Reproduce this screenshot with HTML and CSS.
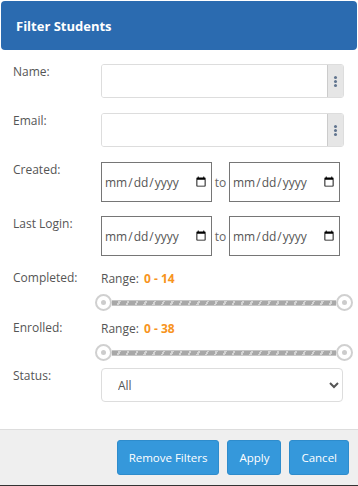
FILE: index.html
```html
<!DOCTYPE html>
<html lang="en">
<head>
    <meta charset="UTF-8">
    <meta name="viewport" content="width=device-width, initial-scale=1.0">
    <title>Filter Students</title>
    <link rel="stylesheet" href="styles.css">
</head>
<body>
    <div class="dialog">
        <header class="dialog-header">
            <h1>Filter Students</h1>
        </header>
        <div class="dialog-body">
            <div class="row text-row">
                <label class="row-label">Name:</label>
                <div class="text-group">
                    <input type="text" class="text-input">
                    <span class="dots-btn"><i></i><i></i><i></i></span>
                </div>
            </div>
            <div class="row text-row">
                <label class="row-label">Email:</label>
                <div class="text-group">
                    <input type="text" class="text-input">
                    <span class="dots-btn"><i></i><i></i><i></i></span>
                </div>
            </div>
            <div class="row">
                <label class="row-label">Created:</label>
                <div class="date-range">
                    <input type="date" class="date-input">
                    <span class="to">to</span>
                    <input type="date" class="date-input">
                </div>
            </div>
            <div class="row">
                <label class="row-label">Last Login:</label>
                <div class="date-range">
                    <input type="date" class="date-input">
                    <span class="to">to</span>
                    <input type="date" class="date-input">
                </div>
            </div>
            <div class="row slider-row">
                <label class="row-label">Completed:</label>
                <div class="slider-box">
                    <div class="range-text">Range: <b>0 - 14</b></div>
                    <div class="slider">
                        <span class="handle"></span>
                        <span class="track"></span>
                        <span class="handle"></span>
                    </div>
                </div>
            </div>
            <div class="row slider-row">
                <label class="row-label">Enrolled:</label>
                <div class="slider-box">
                    <div class="range-text">Range: <b>0 - 38</b></div>
                    <div class="slider">
                        <span class="handle"></span>
                        <span class="track"></span>
                        <span class="handle"></span>
                    </div>
                </div>
            </div>
            <div class="row">
                <label class="row-label">Status:</label>
                <select class="status-select">
                    <option>All</option>
                </select>
            </div>
        </div>
        <footer class="dialog-footer">
            <button class="btn">Remove Filters</button>
            <button class="btn">Apply</button>
            <button class="btn">Cancel</button>
        </footer>
    </div>
</body>
</html>
```

FILE: styles.css
```css
body {
    font-family: 'Open Sans', sans-serif;
    margin: 0;
    padding: 0;
    background: #fff;
    color: #555;
    font-size: 12px;
}
.dialog {
    width: 358px;
    height: 486px;
    display: flex;
    flex-direction: column;
    border-bottom: 1px solid #333;
    box-sizing: border-box;
}
.dialog-header {
    margin: 1px 1px 0;
    height: 49px;
    flex: none;
    background: #2b6bb0;
    border-radius: 4px;
    display: flex;
    align-items: center;
    padding: 0 15px;
}
.dialog-header h1 {
    margin: 0;
    color: #fff;
    font-size: 13px;
    font-weight: 700;
}
.dialog-body {
    flex: 1;
    padding: 14px 14px 0 13px;
}
.row {
    display: flex;
    margin-bottom: 14px;
}
.text-row {
    margin-bottom: 15px;
}
.row-label {
    width: 88px;
    flex: none;
    line-height: 16px;
    color: #555;
}
.text-group {
    display: flex;
    width: 243px;
    height: 34px;
    border: 1px solid #ddd;
    border-radius: 3px;
    box-sizing: border-box;
    overflow: hidden;
}
.text-input {
    flex: 1;
    border: none;
    outline: none;
    min-width: 0;
}
.dots-btn {
    width: 15px;
    background: #e6e6e6;
    border-left: 1px solid #ccc;
    display: flex;
    flex-direction: column;
    align-items: center;
    justify-content: center;
    gap: 1px;
}
.dots-btn i {
    width: 3px;
    height: 3px;
    border-radius: 50%;
    background: #61758f;
}
.date-range {
    display: flex;
    align-items: center;
}
.date-input {
    width: 111px;
    height: 40px;
    box-sizing: border-box;
    border: 1px solid #767676;
    border-radius: 0;
    padding: 0 2px;
    font-family: 'Open Sans', sans-serif;
    font-size: 12px;
    color: #555;
}
.to {
    width: 17px;
    text-align: center;
    color: #666;
}
.slider-row {
    margin-bottom: 9px;
}
.slider-row + .slider-row {
    margin-bottom: 7px;
}
.slider-box {
    width: 244px;
    padding-top: 1px;
}
.range-text {
    line-height: 16px;
    margin-bottom: 7px;
    color: #555;
}
.range-text b {
    color: #f7941d;
    margin-left: 2px;
}
.slider {
    display: flex;
    align-items: center;
    margin-left: -6px;
    width: 258px;
}
.handle {
    width: 17px;
    height: 17px;
    box-sizing: border-box;
    border: 2px solid #d0d0d0;
    border-radius: 50%;
    background: #fff;
    display: flex;
    align-items: center;
    justify-content: center;
    flex: none;
}
.handle::after {
    content: '';
    width: 5px;
    height: 5px;
    border-radius: 50%;
    background: #ccc;
}
.track {
    flex: 1;
    height: 6px;
    background: repeating-linear-gradient(115deg, #a8a8a8 0 6px, #d4d4d4 6px 8px);
    border-top: 1px solid #c6c6c6;
    border-bottom: 1px solid #c6c6c6;
    box-sizing: border-box;
}
.status-select {
    width: 242px;
    height: 34px;
    border: 1px solid #ddd;
    border-radius: 4px;
    background: #fff;
    font-family: 'Open Sans', sans-serif;
    font-size: 12px;
    color: #555;
    padding: 0 12px;
}
.dialog-footer {
    height: 55px;
    flex: none;
    background: #efefef;
    border-top: 1px solid #ddd;
    display: flex;
    justify-content: flex-end;
    align-items: center;
    gap: 8px;
    padding: 0 9px 0 0;
}
.btn {
    height: 35px;
    padding: 0 11px;
    background: #3598db;
    color: #fff;
    border: 1px solid #2e8ccc;
    border-radius: 3px;
    font-family: 'Open Sans', sans-serif;
    font-size: 11.5px;
}
```
